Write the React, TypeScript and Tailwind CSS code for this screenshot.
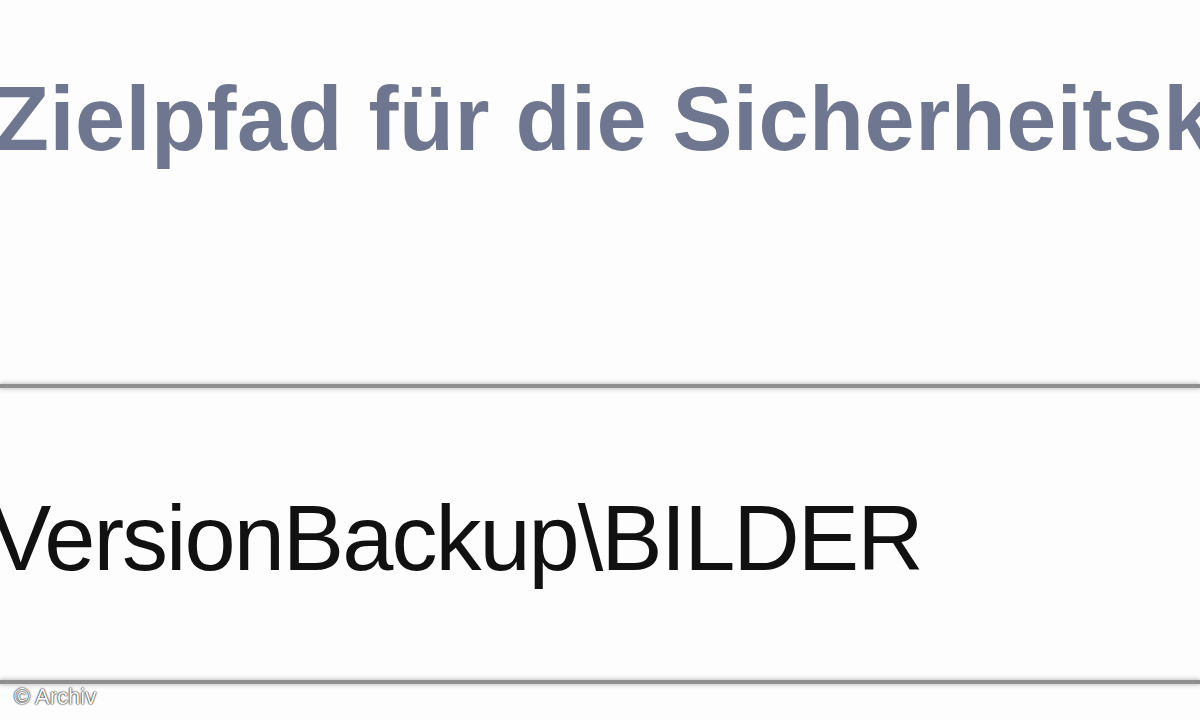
export default function App() {
  return (
    <div className="w-[1200px] h-[720px] overflow-hidden bg-[#fdfdfd] flex flex-col font-['Liberation_Sans',Arial,sans-serif]">
      <div className="h-[74px]" />
      <h1 className="ml-[-6px] whitespace-nowrap text-[90px] leading-[90px] font-bold tracking-[0.5px] text-[#6f7790]">
        Zielpfad für die Sicherheitskopie
      </h1>
      <div className="h-[220px]" />
      <div className="h-[4px] bg-[#8f8f8f] shadow-[0_0_4px_1px_rgba(120,120,120,0.45)]" />
      <div className="h-[104px]" />
      <div className="ml-[-10px] whitespace-nowrap text-[92px] leading-[92px] tracking-[-2px] text-[#111111]">
        VersionBackup\BILDER
      </div>
      <div className="h-[96px]" />
      <div className="h-[4px] bg-[#8f8f8f] shadow-[0_0_4px_1px_rgba(120,120,120,0.45)]" />
      <div className="pl-[14px] pt-[1px] text-[22px] leading-[24px] text-white [text-shadow:0_0_2px_#000,0_0_1px_#000]">
        © Archiv
      </div>
    </div>
  )
}
